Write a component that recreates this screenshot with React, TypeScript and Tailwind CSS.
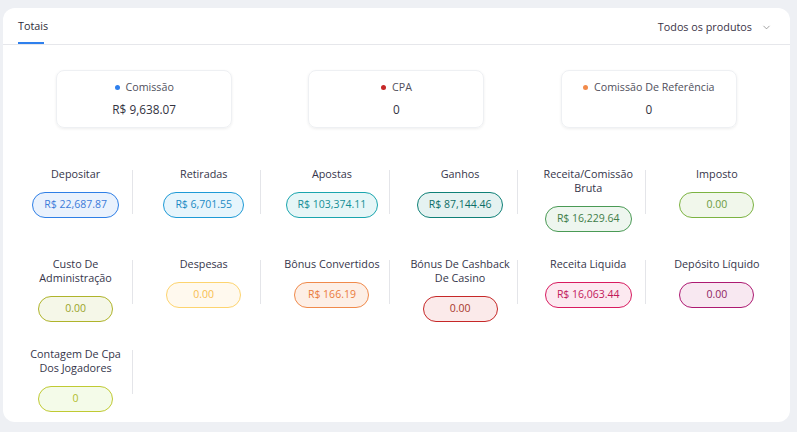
import { ChevronDown } from 'lucide-react';

interface Metric {
  label: string;
  value: string;
  pill: string;
}

const summary = [
  { label: 'Comissão', value: 'R$ 9,638.07', dot: 'bg-[#2f80ed]' },
  { label: 'CPA', value: '0', dot: 'bg-[#c62828]' },
  { label: 'Comissão De Referência', value: '0', dot: 'bg-[#f28b4b]' },
];

const metrics: Metric[] = [
  { label: 'Depositar', value: 'R$ 22,687.87', pill: 'border-[#2f7fe6] bg-[#eaf2fd] text-[#3c7bd9]' },
  { label: 'Retiradas', value: 'R$ 6,701.55', pill: 'border-[#1e9ad6] bg-[#e7f5fc] text-[#1b8ac4]' },
  { label: 'Apostas', value: 'R$ 103,374.11', pill: 'border-[#1aa5ae] bg-[#e6f6f7] text-[#158e96]' },
  { label: 'Ganhos', value: 'R$ 87,144.46', pill: 'border-[#0f8077] bg-[#e5f2f1] text-[#0d6e67]' },
  { label: 'Receita/Comissão Bruta', value: 'R$ 16,229.64', pill: 'border-[#4a9a55] bg-[#eef6ef] text-[#3f7d48]' },
  { label: 'Imposto', value: '0.00', pill: 'border-[#7cb342] bg-[#f1f7eb] text-[#6c9a3d]' },
  { label: 'Custo De Administração', value: '0.00', pill: 'border-[#afb42b] bg-[#f5f7e8] text-[#9aa428]' },
  { label: 'Despesas', value: '0.00', pill: 'border-[#fdd46f] bg-[#fff9ee] text-[#f7bd4f]' },
  { label: 'Bônus Convertidos', value: 'R$ 166.19', pill: 'border-[#f08a4b] bg-[#fdefe6] text-[#ea7b3c]' },
  { label: 'Bónus De Cashback De Casino', value: '0.00', pill: 'border-[#c62828] bg-[#fbeaea] text-[#a8372b]' },
  { label: 'Receita Liquida', value: 'R$ 16,063.44', pill: 'border-[#d81b60] bg-[#fce9f0] text-[#c2185b]' },
  { label: 'Depósito Líquido', value: '0.00', pill: 'border-[#ad1a72] bg-[#f8e8f1] text-[#8e1f5f]' },
  { label: 'Contagem De Cpa Dos Jogadores', value: '0', pill: 'border-[#c0ca33] bg-[#f4fbe9] text-[#b2bd2c]' },
];

export default function App() {
  return (
    <div
      className="min-h-screen bg-[#eef0f4] pt-[8px] pr-[7px] pb-[10px] pl-[3px]"
      style={{ fontFamily: '"Open Sans", "Noto Sans", sans-serif' }}
    >
      <div className="bg-white rounded-[12px] pb-[10px]">
        {/* Header */}
        <div className="h-[37px] border-b border-[#e6e7eb] flex items-end justify-between pl-[15px] pr-[18px]">
          <div className="flex flex-col">
            <span className="text-[10.8px] leading-[14px] text-[#2d2d3a] mb-[9px]">Totais</span>
            <div className="h-[2px] w-[26px] bg-[#2f80ed]"></div>
          </div>
          <div className="flex items-center gap-[9px] mb-[10px]">
            <span className="text-[10.8px] leading-[14px] text-[#3a3346]">Todos os produtos</span>
            <ChevronDown className="w-[11px] h-[11px] text-[#777]" strokeWidth={1.5} />
          </div>
        </div>

        {/* Summary */}
        <div className="grid grid-cols-3 px-[15px] pt-[25px]">
          {summary.map((item) => (
            <div key={item.label} className="flex justify-center">
              <div className="w-[176px] h-[58px] border border-[#eef0f3] rounded-[8px] shadow-[0_1px_3px_rgba(0,0,0,0.07)] flex flex-col items-center pt-[8px]">
                <div className="flex items-center gap-[6px] h-[16px]">
                  <span className={`w-[5px] h-[5px] rounded-full ${item.dot}`}></span>
                  <span className="text-[10.7px] text-[#50505c]">{item.label}</span>
                </div>
                <div className="mt-[5px] text-[11.8px] leading-[18px] text-[#33333f]">{item.value}</div>
              </div>
            </div>
          ))}
        </div>

        {/* Metrics */}
        <div className="grid grid-cols-6 gap-y-[25px] px-[9px] pt-[39px]">
          {metrics.map((m, i) => (
            <div key={m.label} className="px-[7px] flex items-start">
              <div className="flex-1 flex flex-col items-center px-[3px]">
                <p className="text-[10.8px] leading-[14px] text-[#35354a] text-center">{m.label}</p>
                <span
                  className={`mt-[11px] h-[26px] min-w-[75px] px-[11px] rounded-full border inline-flex items-center justify-center text-[10.5px] ${m.pill}`}
                >
                  {m.value}
                </span>
              </div>
              {i % 6 !== 5 && <div className="w-px h-[44px] mt-[3px] bg-[#e4e5e9]"></div>}
            </div>
          ))}
        </div>
      </div>
    </div>
  );
}
